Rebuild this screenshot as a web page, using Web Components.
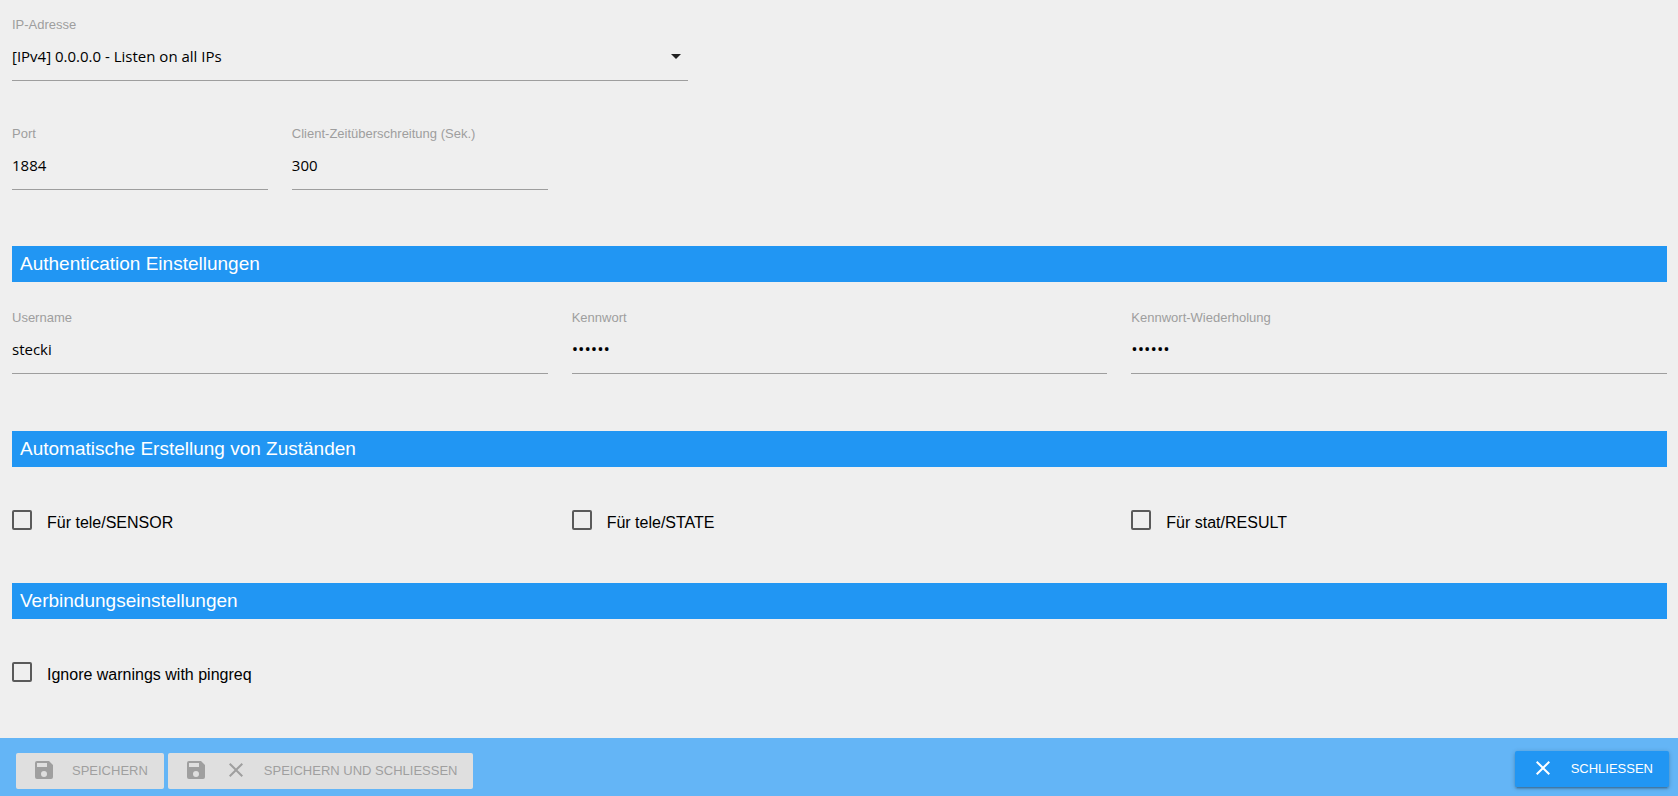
<!DOCTYPE html>
<html lang="de">
<head>
  <meta charset="utf-8">
  <meta name="viewport" content="width=device-width, initial-scale=1">
  <title>MQTT Einstellungen</title>
  <style>
    body {
      margin: 0;
      background: #efefef;
      font-family: "Liberation Sans", Arial, sans-serif;
    }
  </style>
</head>
<body>
  <settings-page></settings-page>

  <script>
    const ICONS = {
      save: 'M17 3H5a2 2 0 0 0-2 2v14a2 2 0 0 0 2 2h14a2 2 0 0 0 2-2V7l-4-4zm-5 16a3 3 0 1 1 0-6 3 3 0 0 1 0 6zm3-10H5V5h10v4z',
      close: 'M19 6.41L17.59 5 12 10.59 6.41 5 5 6.41 10.59 12 5 17.59 6.41 19 12 13.41 17.59 19 19 17.59 13.41 12z'
    };

    const FIELD_STYLE = `
      * {
        box-sizing: border-box;
      }
      :host {
        display: block;
        min-width: 0;
      }
      label {
        display: block;
        font-size: 13px;
        line-height: 16px;
        color: #9e9e9e;
      }
      input, select {
        display: block;
        width: 100%;
        height: 48px;
        margin: 0;
        padding: 0 0 2px;
        border: 0;
        border-bottom: 1px solid #9e9e9e;
        border-radius: 0;
        outline: 0;
        background: transparent;
        color: #000000;
        font-family: "Open Sans", "Noto Sans", sans-serif;
        font-size: 15px;
        appearance: none;
      }
      input[type="password"] {
        font-size: 17px;
      }
      input:focus, select:focus {
        border-bottom-color: #2196f3;
      }
    `;

    class TextField extends HTMLElement {
      connectedCallback() {
        const type = this.getAttribute('type') || 'text';
        this.attachShadow({mode: 'open'}).innerHTML = `
          <style>${FIELD_STYLE}</style>
          <label for="value">${this.getAttribute('label')}</label>
          <input id="value" type="${type}" value="${this.getAttribute('value')}">
        `;
      }
    }

    class SelectField extends HTMLElement {
      connectedCallback() {
        this.attachShadow({mode: 'open'}).innerHTML = `
          <style>
            ${FIELD_STYLE}
            .wrapper {
              display: grid;
              align-items: center;
            }
            .wrapper > * {
              grid-area: 1 / 1;
            }
            svg {
              justify-self: end;
              pointer-events: none;
            }
          </style>
          <label for="value">${this.getAttribute('label')}</label>
          <div class="wrapper">
            <select id="value">
              <option>${this.getAttribute('value')}</option>
            </select>
            <svg width="24" height="24" viewBox="0 0 24 24" fill="#212121"><path d="M7 9l5 5 5-5z"/></svg>
          </div>
        `;
      }
    }

    class CheckField extends HTMLElement {
      connectedCallback() {
        this.attachShadow({mode: 'open'}).innerHTML = `
          <style>
            :host {
              display: block;
            }
            label {
              display: flex;
              align-items: flex-start;
              gap: 15px;
              height: 24px;
              font-size: 16px;
              line-height: 26px;
              color: #000000;
              cursor: pointer;
            }
            input {
              flex: none;
              box-sizing: border-box;
              width: 20px;
              height: 20px;
              margin: 0;
              border: 2px solid #5a5a5a;
              border-radius: 2px;
              appearance: none;
            }
            input:checked {
              border-color: #2196f3;
              background: #2196f3;
            }
          </style>
          <label><input type="checkbox"><span><slot></slot></span></label>
        `;
      }
    }

    class SectionTitle extends HTMLElement {
      connectedCallback() {
        this.attachShadow({mode: 'open'}).innerHTML = `
          <style>
            :host {
              display: block;
              background: #2196f3;
              color: #ffffff;
            }
            h2 {
              margin: 0;
              padding: 0 8px;
              font-size: 19px;
              font-weight: normal;
              line-height: 36px;
            }
          </style>
          <h2><slot></slot></h2>
        `;
      }
    }

    class ActionButton extends HTMLElement {
      connectedCallback() {
        const icons = this.getAttribute('icons').split(' ').map(name =>
          `<svg width="24" height="24" viewBox="0 0 24 24" fill="currentColor"><path d="${ICONS[name]}"/></svg>`
        ).join('');
        this.attachShadow({mode: 'open'}).innerHTML = `
          <style>
            :host {
              display: block;
            }
            button {
              display: flex;
              align-items: center;
              gap: 16px;
              height: 36px;
              margin: 0;
              padding: 0 16px 2px;
              border: 0;
              border-radius: 2px;
              background: #2196f3;
              box-shadow: 0 2px 2px 0 rgba(0, 0, 0, 0.14), 0 3px 1px -2px rgba(0, 0, 0, 0.12), 0 1px 5px 0 rgba(0, 0, 0, 0.2);
              color: #ffffff;
              font-family: inherit;
              font-size: 13px;
              text-transform: uppercase;
              white-space: nowrap;
              cursor: pointer;
            }
            button:disabled {
              background: #dfdfdf;
              box-shadow: none;
              color: #9f9f9f;
              cursor: default;
            }
          </style>
          <button type="button" ${this.hasAttribute('disabled') ? 'disabled' : ''}>${icons}<span><slot></slot></span></button>
        `;
      }
    }

    class ActionBar extends HTMLElement {
      connectedCallback() {
        this.attachShadow({mode: 'open'}).innerHTML = `
          <style>
            :host {
              display: block;
              background: #64b5f6;
            }
            footer {
              display: flex;
              justify-content: space-between;
              padding: 13px 9px 7px 16px;
            }
            .left {
              display: flex;
              gap: 4px;
              padding-top: 2px;
            }
          </style>
          <footer>
            <div class="left"><slot></slot></div>
            <slot name="right"></slot>
          </footer>
        `;
      }
    }

    class SettingsPage extends HTMLElement {
      connectedCallback() {
        this.attachShadow({mode: 'open'}).innerHTML = `
          <style>
            :host {
              display: flex;
              flex-direction: column;
              min-height: 100vh;
            }
            main {
              flex: 1;
              padding: 17px 11px 0 12px;
            }
            .row {
              display: grid;
              grid-template-columns: repeat(12, minmax(0, 1fr));
              column-gap: 24px;
            }
            .s2 { grid-column: span 2; }
            .s4 { grid-column: span 4; }
            .s5 { grid-column: span 5; }
            .fields {
              margin-bottom: 56px;
            }
            .first {
              margin-bottom: 45px;
            }
            section-title + .fields {
              margin: 28px 0 57px;
            }
            .checks {
              padding: 43px 0 49px;
            }
          </style>
          <main>
            <div class="row first">
              <select-field class="s5" label="IP-Adresse" value="[IPv4] 0.0.0.0 - Listen on all IPs"></select-field>
            </div>
            <div class="row fields">
              <text-field class="s2" label="Port" value="1884"></text-field>
              <text-field class="s2" label="Client-Zeitüberschreitung (Sek.)" value="300"></text-field>
            </div>

            <section-title>Authentication Einstellungen</section-title>
            <div class="row fields">
              <text-field class="s4" label="Username" value="stecki"></text-field>
              <text-field class="s4" type="password" label="Kennwort" value="secret"></text-field>
              <text-field class="s4" type="password" label="Kennwort-Wiederholung" value="secret"></text-field>
            </div>

            <section-title>Automatische Erstellung von Zuständen</section-title>
            <div class="row checks">
              <check-field class="s4">Für tele/SENSOR</check-field>
              <check-field class="s4">Für tele/STATE</check-field>
              <check-field class="s4">Für stat/RESULT</check-field>
            </div>

            <section-title>Verbindungseinstellungen</section-title>
            <div class="row checks">
              <check-field class="s4">Ignore warnings with pingreq</check-field>
            </div>
          </main>
          <action-bar>
            <action-button icons="save" disabled>Speichern</action-button>
            <action-button icons="save close" disabled>Speichern und schließen</action-button>
            <action-button slot="right" icons="close">Schließen</action-button>
          </action-bar>
        `;
      }
    }

    customElements.define('text-field', TextField);
    customElements.define('select-field', SelectField);
    customElements.define('check-field', CheckField);
    customElements.define('section-title', SectionTitle);
    customElements.define('action-button', ActionButton);
    customElements.define('action-bar', ActionBar);
    customElements.define('settings-page', SettingsPage);
  </script>
</body>
</html>
